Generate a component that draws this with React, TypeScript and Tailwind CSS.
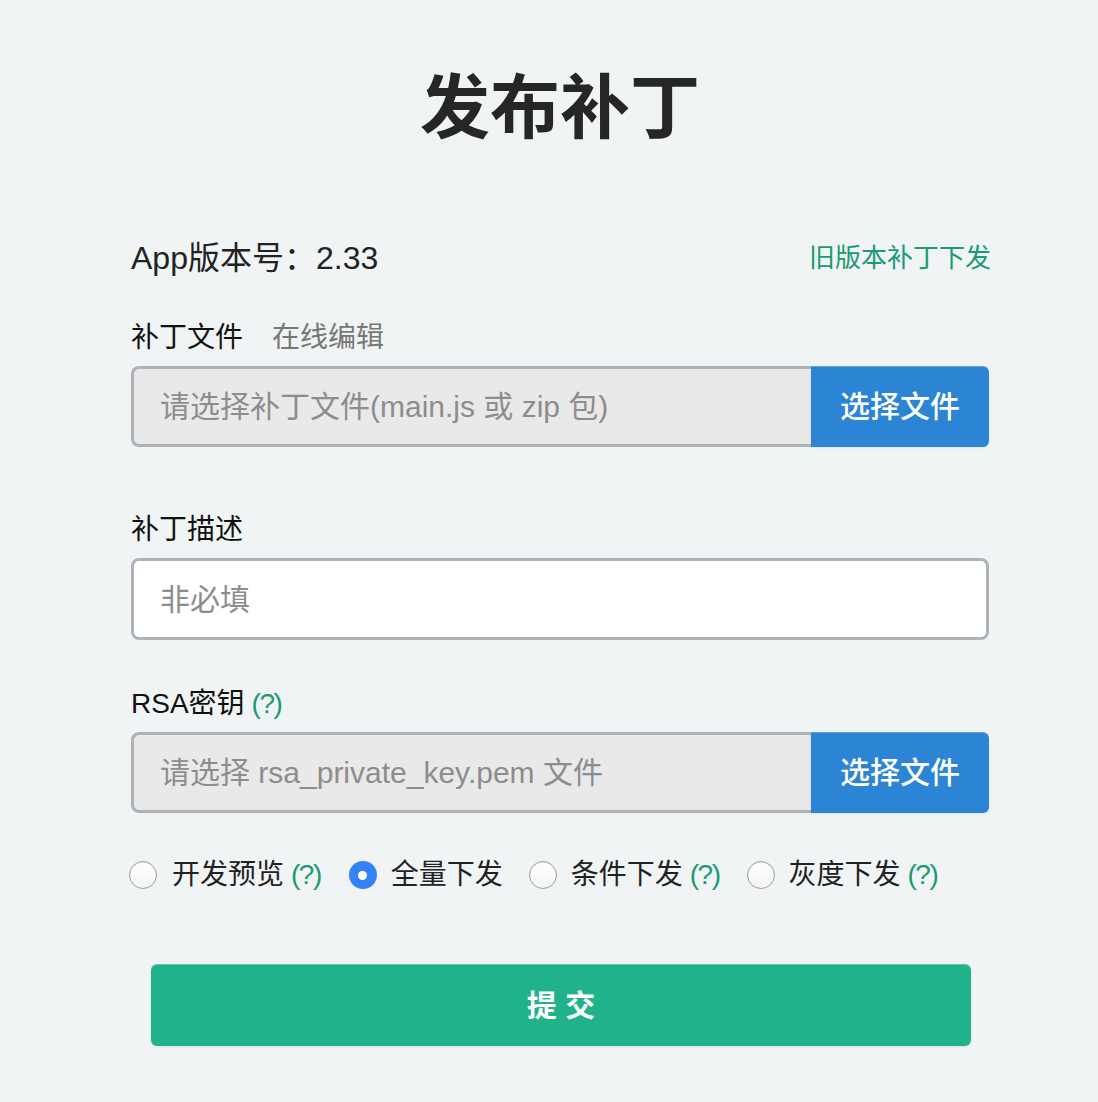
import React from "react";

const FONT = '"Liberation Sans", "Noto Sans CJK SC", sans-serif';

function Radio({ checked }: { checked?: boolean }) {
  if (checked) {
    return (
      <span className="flex h-[28px] w-[28px] shrink-0 items-center justify-center rounded-full bg-[#3483f6]">
        <span className="h-[9px] w-[9px] rounded-full bg-white" />
      </span>
    );
  }
  return (
    <span className="h-[28px] w-[28px] shrink-0 rounded-full border border-[#a0a0a0] bg-gradient-to-b from-white to-[#f4f4f4] shadow-[inset_0_1px_1px_rgba(0,0,0,0.08)]" />
  );
}

function Help() {
  return <span className="ml-[7px] tracking-[-1.5px] text-[#1b9b73]">(?)</span>;
}

function FileInput({ placeholder }: { placeholder: string }) {
  return (
    <div className="flex h-[81px] w-full">
      <div className="flex flex-1 items-center rounded-l-[8px] border-[3px] border-r-0 border-[#adb3b8] bg-[#e9e9e9] pl-[26px] text-[30px] text-[#8d8d8d]">
        {placeholder}
      </div>
      <button className="flex h-full w-[178px] items-center justify-center rounded-r-[6px] bg-[#2b85d4] text-[30px] font-medium text-white shadow-[inset_0_1px_0_rgba(255,255,255,0.25),0_1px_2px_rgba(0,0,0,0.08)]">
        选择文件
      </button>
    </div>
  );
}

export default function App() {
  return (
    <div
      className="min-h-[1102px] w-full bg-[#f0f4f5] text-[#222]"
      style={{ fontFamily: FONT }}
    >
      <div className="ml-[131px] w-[858px] pt-[74px]">
        <h1 className="text-center text-[70px] font-bold leading-[70px] text-[#262626]">
          发布补丁
        </h1>

        <div className="mt-[94px] flex h-[40px] items-center justify-between">
          <div className="text-[32px] leading-[40px] text-[#222]">App版本号：2.33</div>
          <a className="-mr-[2px] text-[26px] leading-[40px] text-[#1b9b73]">旧版本补丁下发</a>
        </div>

        <div className="mt-[42px] flex h-[36px] items-center text-[28px] leading-[36px]">
          <span className="text-[#111]">补丁文件</span>
          <span className="ml-[29px] text-[#777]">在线编辑</span>
        </div>
        <div className="mt-[10px]">
          <FileInput placeholder="请选择补丁文件(main.js 或 zip 包)" />
        </div>

        <div className="mt-[65px] flex h-[36px] items-center text-[28px] leading-[36px] text-[#111]">
          补丁描述
        </div>
        <div className="mt-[10px] flex h-[82px] items-center rounded-[8px] border-[3px] border-[#adb3b8] bg-white pl-[26px] text-[30px] text-[#8d8d8d]">
          非必填
        </div>

        <div className="mt-[46px] flex h-[36px] items-center text-[28px] leading-[36px] text-[#111]">
          RSA密钥
          <Help />
        </div>
        <div className="mt-[10px]">
          <FileInput placeholder="请选择 rsa_private_key.pem 文件" />
        </div>

        <div className="-ml-[2px] mt-[44px] flex h-[36px] items-center text-[28px] leading-[36px] text-[#222]">
          <label className="flex items-center">
            <Radio />
            <span className="ml-[15px]">开发预览</span>
            <Help />
          </label>
          <label className="ml-[28px] flex items-center">
            <Radio checked />
            <span className="ml-[14px]">全量下发</span>
          </label>
          <label className="ml-[26px] flex items-center">
            <Radio />
            <span className="ml-[14px]">条件下发</span>
            <Help />
          </label>
          <label className="ml-[27px] flex items-center">
            <Radio />
            <span className="ml-[14px]">灰度下发</span>
            <Help />
          </label>
        </div>

        <button className="ml-[20px] mt-[71px] flex h-[82px] w-[820px] items-center justify-center rounded-[6px] bg-[#20b28a] text-[30px] font-bold text-white shadow-[inset_0_1px_0_rgba(255,255,255,0.25),0_1px_3px_rgba(0,0,0,0.08)]">
          提 交
        </button>
      </div>
    </div>
  );
}
